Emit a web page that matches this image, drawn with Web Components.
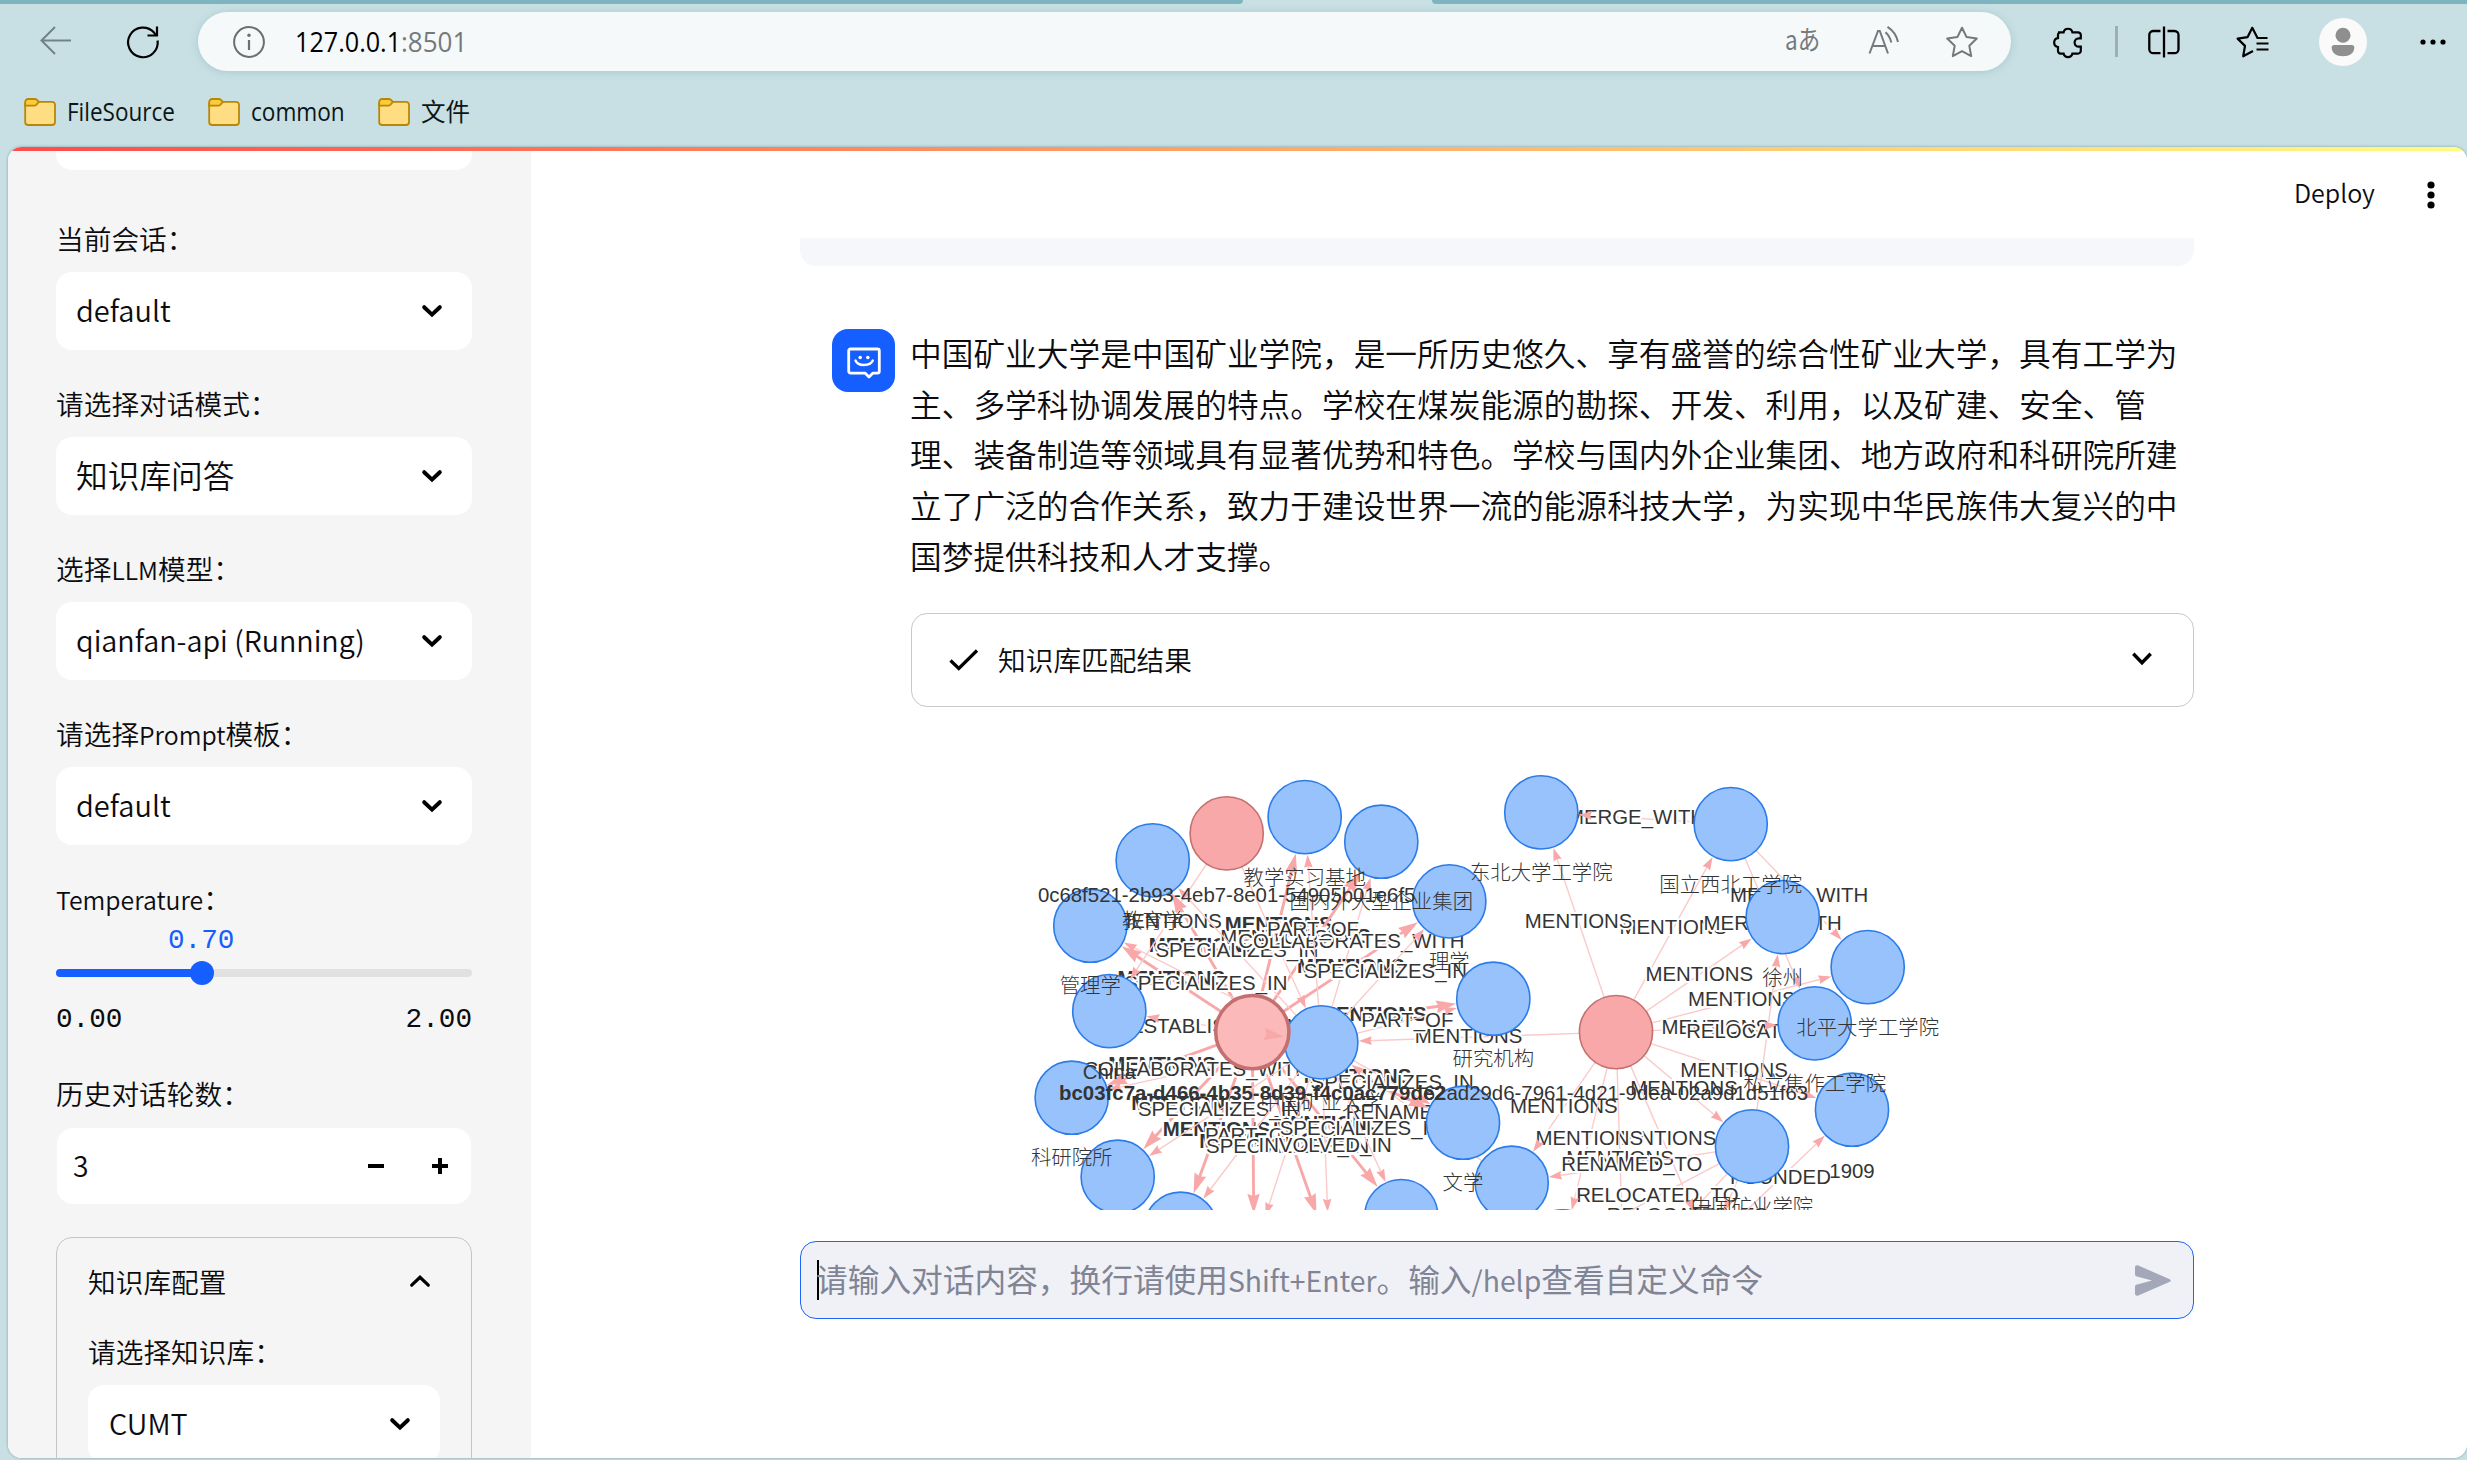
<!DOCTYPE html>
<html lang="zh-CN">
<head>
<meta charset="utf-8">
<title>127.0.0.1:8501</title>
<style>
html,body{margin:0;height:100%;overflow:hidden}
body{font-family:"Noto Sans CJK SC",sans-serif;font-weight:350;color:#0c0c0f;background:#c8e0e4;font-size:31.7px}
</style>
</head>
<body>
<app-window></app-window>
<script>
const define=(name,html,setup)=>customElements.define(name,class extends HTMLElement{
  connectedCallback(){
    if(this.shadowRoot)return;
    const t=document.createElement('template');
    t.innerHTML=html;
    this.attachShadow({mode:'open'}).append(t.content.cloneNode(true));
    if(setup)setup(this,this.shadowRoot);
  }
});

/* Text run scaled horizontally to a fixed advance width. */
define('fit-text',`<style>:host{display:inline-block;white-space:nowrap;width:var(--w)}span{display:inline-block;transform-origin:0 50%}</style><span><slot></slot></span>`,
 (el,root)=>{
  const w=+el.getAttribute('w');el.style.setProperty('--w',w+'px');
  const s=root.querySelector('span');
  requestAnimationFrame(()=>{const n=s.offsetWidth;if(n)s.style.transform=`scaleX(${w/n})`;});
 });

const ICONS={
 back:['0 0 32 32',`<path d="M31 15.5H2M15 2 1.5 15.5 15 29" fill="none" stroke="#728388" stroke-width="2"/>`],
 reload:['0 0 32 32',`<path d="M30.6 14.5A14.8 14.8 0 1 1 27 6.6L29 9" fill="none" stroke="#000" stroke-width="2.2"/><path d="M30 .5V9.5H20.5" fill="none" stroke="#000" stroke-width="2.2"/>`],
 info:['0 0 32 32',`<circle cx="16" cy="16" r="14.9" fill="none" stroke="#6b6f71" stroke-width="2"/><path d="M16 14v10" stroke="#6b6f71" stroke-width="2.2"/><circle cx="16" cy="9.2" r="1.7" fill="#6b6f71"/>`],
 folder:['0 0 32 28',`<path d="M1.2 5.5V24a3 3 0 0 0 3 3H28a3 3 0 0 0 3-3V6.8a3 3 0 0 0-3-3H15z" fill="#ffde83" stroke="#b88706" stroke-width="1.8"/><path d="M1.2 7.7V4a3 3 0 0 1 3-3h6.5a3 3 0 0 1 2 .7l2.3 2.2-3 3.2a2.4 2.4 0 0 1-1.6.6z" fill="#fbcb3b" stroke="#b88706" stroke-width="1.8"/>`],
 read:['0 0 32 32',`<path d="M1.5 27.5 10 5h1.8L20 27.5M4.6 20h12.6" fill="none" stroke="#76797b" stroke-width="2"/><path d="M17.5 6.2a19 19 0 0 1 5.8 10.3M19.5.8A24 24 0 0 1 30 16" fill="none" stroke="#76797b" stroke-width="2"/>`],
 star:['0 0 32 32',`<path d="m16 1.7 4.6 9.4 10.2 1.4-7.5 7.2 1.9 10.4-9.2-5-9.2 5 1.9-10.4-7.5-7.2 10.2-1.4z" fill="none" stroke="#76797b" stroke-width="2" stroke-linejoin="round"/>`],
 puzzle:['0 0 30 32',`<path d="M5 6.3h5.6a4.5 4.5 0 0 1 8.8 0H25a2.8 2.8 0 0 1 2.8 2.8v3.2h-2a4.2 4.2 0 0 0 0 8.4h2v4.1a2.8 2.8 0 0 1-2.8 2.8h-5.6a4.5 4.5 0 0 1-8.800 0H7.400a2.400 2.800 0 0 1-2.400-2.800V21a4.500 4.500 0 0 1 0-8.900V9a2.700 2.700 0 0 1 2.700-2.700" fill="none" stroke="#000" stroke-width="2.200"/>`],
 split:['0 0 32 32',`<path d="M16 .5v31M12.500 5H5A4 4 0 0 0 1.300 9v14.500a4 4 0 0 0 4 3.700h7.200M19.500 5h7a4 4 0 0 1 4 4v14.500a4 4 0 0 1-4 3.700h-7" fill="none" stroke="#000" stroke-width="2.300"/>`],
 favs:['0 0 33 32',`<path d="M31.500 12h-10l-5.200-10.200-4.700 9.300-10 1.500 7.400 7.300-1.800 10.400L17 25M20.500 17.500h12M20.500 23.500h12" fill="none" stroke="#000" stroke-width="2.200" stroke-linejoin="round"/>`],
 user:['0 0 48 48',`<circle cx="24" cy="24" r="24" fill="#fafafa"/><circle cx="24" cy="17.300" r="7.500" fill="#8f8f8f"/><path d="M15.200 27h17.600a2.500 2.500 0 0 1 2.500 2.500c0 5.600-4.800 8.700-11.300 8.700s-11.300-3.100-11.300-8.700A2.500 2.500 0 0 1 15.200 27z" fill="#8f8f8f"/>`],
 more:['0 0 28 8',`<g fill="#000"><circle cx="4" cy="4" r="2.600"/><circle cx="14" cy="4" r="2.600"/><circle cx="24" cy="4" r="2.600"/></g>`],
 dots:['0 0 8 28',`<g fill="#000"><circle cx="4" cy="4" r="3.600"/><circle cx="4" cy="14" r="3.600"/><circle cx="4" cy="24" r="3.600"/></g>`],
 down:['0 0 20 12',`<path d="M2.200 2.200 10 9.600l7.800-7.400" fill="none" stroke="#000" stroke-width="4" stroke-linecap="round"/>`],
 thindown:['0 0 20 13',`<path d="M1.300 1.800 10 10.800l8.700-9" fill="none" stroke="#000" stroke-width="3.400"/>`],
 up:['0 0 20 12',`<path d="M1.700 10.200 10 2.300l8.300 7.900" fill="none" stroke="#000" stroke-width="3.200" stroke-linecap="round"/>`],
 minus:['0 0 16 16',`<path d="M0 8h16" stroke="#000" stroke-width="4"/>`],
 plus:['0 0 16 16',`<path d="M0 8h16M8 0v16" stroke="#000" stroke-width="4"/>`],
 check:['0 0 30 22',`<path d="M1.500 11.500 9.800 19.500 28 1.500" fill="none" stroke="#000" stroke-width="3.200"/>`],
 bot:['0 0 36 32',`<path d="M4.500 2h27A1.800 1.800 0 0 1 33.300 3.800v20.500a1.800 1.800 0 0 1-1.800 1.800H27L23 30l-4-3.900H4.500a1.800 1.800 0 0 1-1.800-1.800V3.800A1.800 1.800 0 0 1 4.500 2z" fill="none" stroke="#fff" stroke-width="2.800" stroke-linejoin="round"/><path d="M9.500 13.500c2.500 6 14.500 6 17.300 0" fill="none" stroke="#fff" stroke-width="2.400" stroke-linecap="round"/><circle cx="14.200" cy="10.500" r="1.800" fill="#fff"/><circle cx="21.800" cy="10.500" r="1.800" fill="#fff"/>`],
 send:['0 0 36 31',`<path d="M0 2.500C0 .6 1.700-.2 3.300.6l31 13.300c2 .9 2 2.300 0 3.200l-31 13.300C1.700 31.200 0 30.300 0 28.500V22c0-1.500.6-2.300 2-2.600L17 15.500 2 11.600C.6 11.200 0 10.500 0 9z" fill="#a3a8b8"/>`]
};
define('ui-icon',`<style>:host{display:block;flex:none}svg{display:block;width:100%;height:100%;overflow:visible}</style>`,
 (el,root)=>{
  const [vb,body]=ICONS[el.getAttribute('name')];
  const [w,h]=vb.split(' ').slice(2);
  el.style.width=(el.getAttribute('w')||w)+'px';el.style.height=(el.getAttribute('h')||h)+'px';
  const t=document.createElement('template');
  t.innerHTML=`<svg viewBox="${vb}">${body}</svg>`;
  root.append(t.content);
 });

define('book-mark',`<style>:host{display:flex;align-items:center;gap:11px;font:25px/32px "Open Sans","Noto Sans CJK SC",sans-serif;color:#0d1517}.t{margin-top:-3px}</style><ui-icon name="folder"></ui-icon><div class="t"><slot></slot></div>`);

define('browser-chrome',`<style>
:host{display:flex;flex-direction:column;height:147px}
.tabs{display:flex;height:4px;justify-content:space-between}
.tabs i{background:#7db4bf;display:block}
.tabs .l{width:1243px;border-bottom-right-radius:4px}.tabs .r{width:1035px;border-bottom-left-radius:4px}
.bar{display:flex;align-items:center;height:59px;margin-top:8px}
.pill{display:flex;align-items:center;box-sizing:border-box;width:1813px;height:59px;margin-left:39px;padding:0 33px 0 35px;border-radius:30px;background:#f5f9fa;box-shadow:0 1px 8px rgba(80,130,140,.25)}
.url{margin-left:30px;font:28px/40px "Open Sans",sans-serif;color:#000;flex:1;display:flex;margin-top:-1px}
.port{color:#76797b}
.tr{font:27px/40px "Noto Sans CJK JP",sans-serif;color:#76797b;margin:-5px 48px 0 0}
.marks{display:flex;align-items:center;height:40px;margin:21px 0 0 24px}
</style>
<div class="tabs"><i class="l"></i><i class="r"></i></div>
<div class="bar"><ui-icon name="back" style="margin:-2px 55px 0 40px"></ui-icon><ui-icon name="reload"></ui-icon>
<div class="pill"><ui-icon name="info"></ui-icon><div class="url"><fit-text w="106">127.0.0.1</fit-text><fit-text class="port" w="66">:8501</fit-text></div>
<fit-text class="tr" w="35">aあ</fit-text><ui-icon name="read" style="margin-right:46px"></ui-icon><ui-icon name="star"></ui-icon></div>
<ui-icon name="puzzle" style="margin-left:42px"></ui-icon><span style="width:3px;height:31px;background:#9cafb3;margin:0 30px 0 32px"></span>
<ui-icon name="split"></ui-icon><ui-icon name="favs" style="margin-left:56px"></ui-icon><ui-icon name="user" style="margin-left:50px"></ui-icon><ui-icon name="more" style="margin-left:52px"></ui-icon></div>
<div class="marks"><book-mark><fit-text w="108">FileSource</fit-text></book-mark><book-mark style="margin-left:33px"><fit-text w="94">common</fit-text></book-mark><book-mark style="margin-left:33px"><fit-text w="49">文件</fit-text></book-mark></div>`);

define('field-label',`<style>:host{display:block;font-size:27.700px;line-height:32px;height:32px;white-space:nowrap}</style><slot></slot>`);

define('select-field',`<style>
:host{display:block}
.box{display:flex;align-items:center;justify-content:space-between;box-sizing:border-box;height:78px;padding:0 30px 0 20px;margin-top:18px;background:#fff;border-radius:16px;line-height:40px}
.v{margin-top:-4px}
</style><field-label><slot name="label"></slot></field-label><div class="box"><span class="v"><slot></slot></span><ui-icon name="down"></ui-icon></div>`);

define('range-field',`<style>
:host{display:block}
.mono{font:27.700px/32px "Liberation Mono",monospace}
.val{color:#155eff;margin:11px 0 0 112px}
.track{height:8px;margin-top:12px;border-radius:4px;background:linear-gradient(90deg,#155eff 35%,#e1e1e1 35%);display:flex;align-items:center}
.track i{width:24px;height:24px;border-radius:50%;background:#155eff;margin-left:133.500px}
.ends{display:flex;justify-content:space-between;margin-top:26.500px;margin-bottom:-1.500px}
</style><field-label><slot name="label"></slot></field-label><div class="mono val"><slot></slot></div><div class="track"><i></i></div><div class="mono ends"><slot name="min"></slot><slot name="max"></slot></div>`);

define('number-field',`<style>
:host{display:block}
.box{display:flex;align-items:center;height:76px;margin:19.500px 1px 0;padding:0 23px 0 16px;background:#fff;border-radius:16px;font-size:28.300px}
span{flex:1;line-height:40px;margin-top:-2px}ui-icon+ui-icon{margin-left:48px}
</style><field-label><slot name="label"></slot></field-label><div class="box"><span><slot></slot></span><ui-icon name="minus"></ui-icon><ui-icon name="plus"></ui-icon></div>`);

define('side-panel',`<style>
:host{display:block;box-sizing:border-box;width:523px;flex:none;background:#f5f5f5;padding:0 59px 0 48px;overflow:hidden}
.top{height:19px;border-radius:0 0 16px 16px;background:#fff;margin-bottom:52px}
select-field{margin-bottom:37px}
small{font-size:.895em}
.exp{border:1px solid #c5c5c5;border-radius:16px;margin-top:33px;padding:26.500px 31px 40px;height:300px}
.head{display:flex;justify-content:space-between;align-items:center;margin-bottom:38.500px;padding-right:10px}
</style>
<div class="top"></div>
<select-field><span slot="label">当前会话：</span><fit-text w="95">default</fit-text></select-field>
<select-field><span slot="label">请选择对话模式：</span>知识库问答</select-field>
<select-field><span slot="label">选择<small>LLM</small>模型：</span><fit-text w="289">qianfan-api (Running)</fit-text></select-field>
<select-field><span slot="label">请选择<small>Prompt</small>模板：</span><fit-text w="95">default</fit-text></select-field>
<range-field><span slot="label"><small>Temperature</small>：</span>0.70<span slot="min">0.00</span><span slot="max">2.00</span></range-field>
<number-field style="margin-top:42.500px"><span slot="label">历史对话轮数：</span>3</number-field>
<div class="exp"><div class="head"><field-label>知识库配置</field-label><ui-icon name="up"></ui-icon></div>
<select-field><span slot="label">请选择知识库：</span><fit-text w="79" style="margin-left:1px">CUMT</fit-text></select-field></div>`,
 (el,root)=>root.querySelectorAll('fit-text').forEach(f=>f.style.fontSize='28.400px'));

define('chat-message',`<style>
:host{display:flex;padding:0 0 0 32px;margin-top:63px}
.av{width:63px;height:63px;border-radius:16px;background:#155eff;flex:none;display:flex;align-items:center;justify-content:center;margin-right:16px}
.body{flex:1;min-width:0}
.t{line-height:50.700px;white-space:nowrap;margin:-2px 0 0 -1px}
</style><div class="av"><ui-icon name="bot" w="36" h="32" style="margin-top:4px"></ui-icon></div><div class="body"><div class="t"><slot name="text"></slot></div><slot></slot></div>`);

define('result-expander',`<style>
:host{display:flex;align-items:center;box-sizing:border-box;height:94px;margin-top:32.500px;border:1px solid #c9c9c9;border-radius:16px;padding:0 41px 0 37px;font-size:27.700px}
span{flex:1;margin-left:19px;line-height:40px;margin-top:-2px}
</style><ui-icon name="check"></ui-icon><span><slot></slot></span><ui-icon name="thindown" style="margin-top:-3px"></ui-icon>`);

/* Entity graph. Node and edge coordinates are in page units, origin at (911, 707). */
const NODES={
 n1:[1152.7,860,'教育学'],n2:[1226.7,833,'0c68f521-2b93-4eb7-8e01-54905b01e6f5','p'],n3:[1304.7,816.7,'教学实习基地'],n4:[1381.3,841.3,'国内外大型企业集团'],
 n5:[1449.3,901,'理学'],n6:[1090.3,925.3,'管理学'],n7:[1109.3,1010.7,'China'],n9:[1321.3,1042,'中国矿业大学'],n10:[1493.3,998.3,'研究机构'],
 n11:[1071.7,1097.3,'科研院所'],n12:[1117.7,1176.3,''],n13:[1180.7,1228.3,''],n14:[1401.3,1215.7,''],n15:[1463,1122.3,'文学'],n16:[1511.7,1182.3,''],
 n17:[1541.3,812,'东北大学工学院'],n18:[1730.7,823.7,'国立西北工学院'],n19:[1782.7,916.7,'徐州'],n20:[1867.7,966.7,'北平大学工学院'],
 n21:[1814.7,1023,'私立焦作工学院'],n22:[1852,1109.3,'1909'],n23:[1752,1146,'中国矿业学院'],n24:[1616,1031.7,'62ad29d6-7961-4d21-9dea-02a9d1d51f63','p'],
 n25:[1562.7,1246,''],n26:[1709,1246,''],n27:[1624,1286,''],b1:[1254,1251,''],b2:[1329,1249,''],
 n8:[1252.3,1031.7,'bc03fc7a-d466-4b35-8d39-f4c0ac779de2','s']
};
const M='MENTIONS',S='SPECIALIZES_IN',P='PART_OF',C='COLLABORATES_WITH',R='RELOCATED_TO',G='MERGE_WITH';
const EDGES=[
 ...['n1','n3','n4','n5','n6','n9','n10','n11','n12','n13','n14','n15','b1','b2'].map(n=>['n8',n,M,1]),
 ['n2','n7',M],['n2','n9',M],['n24','n9',M],['n9','n7','ESTABLISHED_IN'],
 ['n9','n1',S],['n9','n6',S],['n9','n4',C],['n9','n3',P],['n9','n5',S],['n9','n10',P],['n9','n11',C],['n9','n12',S],['n9','n13',P],
 ['n9','b1',S],['n9','b2','INVOLVED_IN'],['n16','n9','RENAMED_TO'],['n9','n15',S],['n9','n14',S],
 ['n24','n18',M],['n24','n17',M],['n18','n17',G],['n18','n20',G],['n18','n21',G],['n24','n19',M],['n24','n20',M],['n24','n21',M],['n24','n22',M],['n24','n23',M],
 ['n23','n19',R],['n24','n16',M],['n24','n26',M],['n24','n25',M],['n24','n27',M],['n23','n16','RENAMED_TO'],['n23','n26',''],['n23','n27',R],['n23','n25',R],['n26','n22','FOUNDED']
];
define('knowledge-graph',`<style>:host{display:block;height:503px;overflow:hidden}svg{display:block}
text{font:20.400px "Liberation Sans","Noto Sans CJK SC",sans-serif;fill:#343434;text-anchor:middle}
.e{paint-order:stroke;stroke:#fff;stroke-width:4px;stroke-linejoin:round}.b{font-weight:bold}.n{font-weight:300}.n.b{font-weight:bold}</style>`,
 (el,root)=>{
  let lines='',arrows='',circles='',labels='';
  for(const [a,b,label,sel] of EDGES){
   const [x1,y1]=NODES[a],[x2,y2]=NODES[b],d=Math.hypot(x2-x1,y2-y1),ux=(x2-x1)/d,uy=(y2-y1)/d;
   const tx=x2-ux*37.5,ty=y2-uy*37.5,L=sel?20:13,H=sel?6.2:4.3;
   lines+=`<line x1="${x1}" y1="${y1}" x2="${tx-ux*L*.7}" y2="${ty-uy*L*.7}" stroke="${sel?'#f8a8a8':'#fbcaca'}" stroke-width="${sel?2.9:1.4}"/>`;
   if(label)lines+=`<text class="e${sel?' b':''}" x="${(x1+x2)/2}" y="${(y1+y2)/2+6}">${label}</text>`;
   const bx=tx-ux*L,by=ty-uy*L;
   arrows+=`<path d="M${tx} ${ty}L${bx-uy*H} ${by+ux*H}L${bx+ux*L*.1} ${by+uy*L*.1}L${bx+uy*H} ${by-ux*H}Z" fill="#f8a8a8"/>`;
  }
  for(const [x,y,label,k] of Object.values(NODES)){
   const [f,s,w]=k==='s'?['#fbb9b9','#c57070',3.6]:k==='p'?['#f8a8a8','#c57070',1.6]:['#97c2fc','#2b7ce9',1.6];
   circles+=`<circle cx="${x}" cy="${y}" r="36.600" fill="${f}" stroke="${s}" stroke-width="${w}"/>`;
   const cjk=/[\u4e00-\u9fff]/.test(label);
   if(label&&y<1150)labels+=`<text x="${x}" y="${y+(cjk?67.6:68.2)}" class="n${k==='s'?' b':''}">${label}</text>`;
  }
  const t=document.createElement('template');
  t.innerHTML=`<svg width="1283" height="503" viewBox="911 706.600 1283 503">${lines}${circles}${arrows}${labels}</svg>`;
  root.append(t.content);
 });

define('chat-input',`<style>
:host{display:flex;align-items:center;box-sizing:border-box;height:78px;border:1.500px solid #1f64f5;border-radius:16px;background:#f0f1f6;padding:0 22px 0 16px;color:#808495;font-weight:400}
i{width:2px;height:40px;background:#000;flex:none}
span{flex:1;line-height:40px;margin:-3px 0 0 -3px}
</style><i></i><span><slot></slot></span><ui-icon name="send"></ui-icon>`);

define('main-view',`<style>
:host{display:flex;flex-direction:column;flex:1;min-width:0;background:#fff}
header{display:flex;align-items:center;justify-content:flex-end;height:87px;padding-right:32px;font-size:25px;line-height:40px}
header fit-text{margin:-5px 52px 0 0}
.scroll{height:972px;width:1394px;margin-left:269px;overflow:hidden}
.prev{height:28px;background:#f6f7fa;border-radius:0 0 16px 16px}
chat-input{width:1394px;margin:31px 0 0 269px}
small{font-size:.895em}
</style>
<header><fit-text w="81">Deploy</fit-text><ui-icon name="dots"></ui-icon></header>
<div class="scroll"><div class="prev"></div>
<chat-message><div slot="text">中国矿业大学是中国矿业学院，是一所历史悠久、享有盛誉的综合性矿业大学，具有工学为<br>主、多学科协调发展的特点。学校在煤炭能源的勘探、开发、利用，以及矿建、安全、管<br>理、装备制造等领域具有显著优势和特色。学校与国内外企业集团、地方政府和科研院所建<br>立了广泛的合作关系，致力于建设世界一流的能源科技大学，为实现中华民族伟大复兴的中<br>国梦提供科技和人才支撑。</div>
<result-expander>知识库匹配结果</result-expander><knowledge-graph></knowledge-graph></chat-message></div>
<chat-input>请输入对话内容，换行请使用<small>Shift+Enter</small>。输入<small>/help</small>查看自定义命令</chat-input>`);

define('app-window',`<style>
:host{display:flex;flex-direction:column;height:1460px;width:2467px}
.page{display:flex;flex-direction:column;height:1311px;margin-left:8px;border-radius:14px;overflow:hidden;background:#fff;box-shadow:0 0 3px rgba(60,100,110,.55)}
.line{height:4px;flex:none;background:linear-gradient(90deg,#ff4b4b,#fffd80)}
.row{display:flex;flex:1;min-height:0}
</style><browser-chrome></browser-chrome><div class="page"><div class="line"></div><div class="row"><side-panel></side-panel><main-view></main-view></div></div>`);
</script>
</body>
</html>
